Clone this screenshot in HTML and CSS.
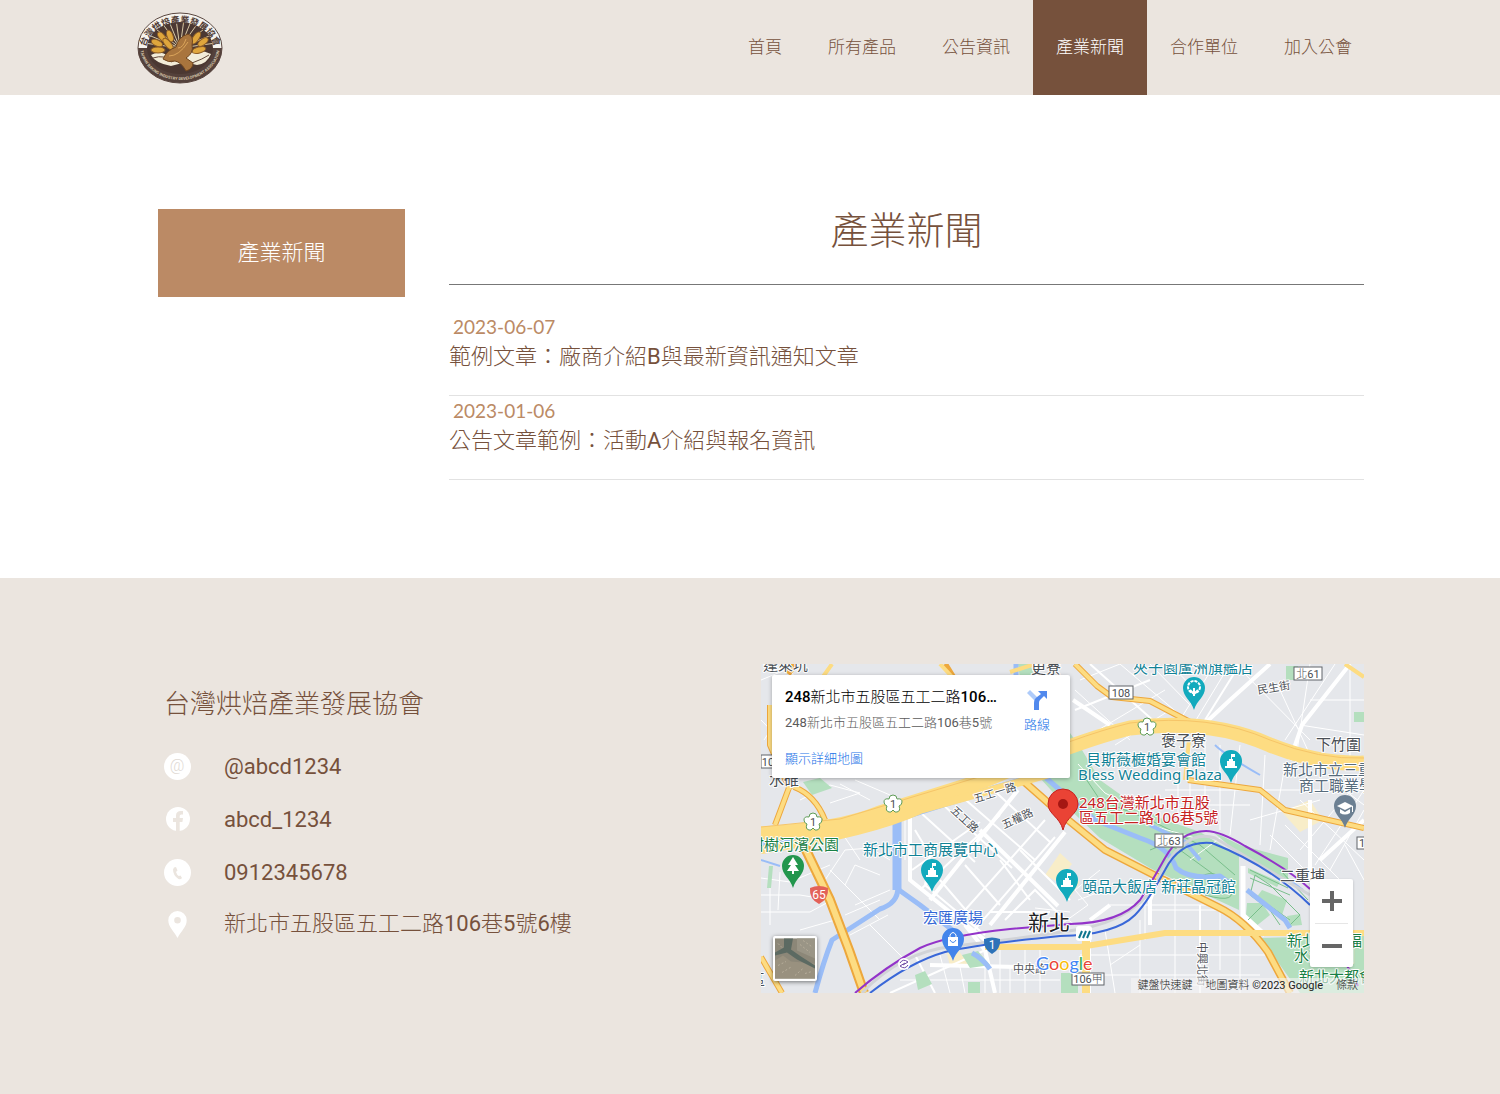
FILE: index.html
```html
<!DOCTYPE html>
<html lang="zh-Hant">
<head>
<meta charset="utf-8">
<meta name="viewport" content="width=device-width, initial-scale=1">
<title>產業新聞 - 台灣烘焙產業發展協會</title>
<link rel="stylesheet" href="styles.css">
</head>
<body>
<header class="site-header">
  <div class="header-inner">
    <a class="logo" href="#" aria-label="台灣烘焙產業發展協會">
      <svg width="86" height="72" viewBox="0 0 86 72">
        <defs>
          <path id="arc-top" d="M8 40 A35 29 0 0 1 78 40"/>
          <path id="arc-bottom" d="M3 34 A40 34 0 0 0 83 34"/>
          <clipPath id="disc"><ellipse cx="43" cy="36" rx="33" ry="26"/></clipPath>
        </defs>
        <ellipse cx="43" cy="36" rx="42" ry="35" fill="#f6f3ee" stroke="#5a4740" stroke-width="1"/>
        <path d="M1 36 A42 35 0 0 0 85 36Z" fill="#54413b"/>
        <ellipse cx="43" cy="36" rx="33" ry="26" fill="#4b3832"/>
        <g clip-path="url(#disc)">
          <path d="M43 36L4 20M43 36L10 10M43 36L20 4M43 36L29 2M43 36L38 0M43 36L48 0M43 36L57 2M43 36L66 4M43 36L76 10M43 36L82 20M43 36L0 30M43 36L86 30" stroke="#d9c9a6" stroke-width="1"/>
          <path d="M14 43Q22 38 30 43T50 42T74 42Q70 52 60 53Q48 49 34 54Q18 51 14 43Z" fill="#f2ecd8"/>
          <path d="M16 46Q28 42 34 50Q44 44 55 51Q66 47 72 43" fill="none" stroke="#63493a" stroke-width="1"/>
        </g>
        <g fill="#dfa63c" stroke="#8e5d25" stroke-width="1">
          <ellipse cx="20" cy="31" rx="6" ry="3" transform="rotate(25 20 31)"/>
          <ellipse cx="25" cy="25" rx="6" ry="3" transform="rotate(50 25 25)"/>
          <ellipse cx="21" cy="38" rx="7" ry="3"/>
          <ellipse cx="31" cy="32" rx="7" ry="3" transform="rotate(50 31 32)"/>
          <ellipse cx="33" cy="24" rx="6" ry="3" transform="rotate(70 33 24)"/>
          <ellipse cx="59" cy="26" rx="7" ry="3" transform="rotate(-55 59 26)"/>
          <ellipse cx="66" cy="30" rx="6" ry="3" transform="rotate(-35 66 30)"/>
          <ellipse cx="62" cy="38" rx="7" ry="3" transform="rotate(-15 62 38)"/>
        </g>
        <path d="M26 47Q30 38 39 35Q41 25 51 22Q57 24 55 33Q57 41 49 46L56 51Q56 57 49 59Q44 50 38 49Q31 51 26 47Z" fill="#a9753d" stroke="#70461f" stroke-width="1"/>
        <path d="M32 44Q42 44 51 30M41 36Q46 36 49 27" fill="none" stroke="#dba55b" stroke-width="1"/>
        <text class="logo-name"><textPath href="#arc-top" startOffset="50%" text-anchor="middle">台灣烘焙產業發展協會</textPath></text>
        <text class="logo-english"><textPath href="#arc-bottom" startOffset="50%" text-anchor="middle">TAIWAN BAKING INDUSTRY DEVELOPMENT ASSOCIATION</textPath></text>
      </svg>
    </a>
    <nav class="main-nav">
      <a href="#">首頁</a>
      <a href="#">所有產品</a>
      <a href="#">公告資訊</a>
      <a class="active" href="#" aria-current="page">產業新聞</a>
      <a href="#">合作單位</a>
      <a href="#">加入公會</a>
    </nav>
  </div>
</header>

<main class="container news">
  <aside class="sidebar"><a class="category" href="#">產業新聞</a></aside>
  <section class="news-content">
    <h1>產業新聞</h1>
    <ul class="news-list">
      <li>
        <time datetime="2023-06-07">2023-06-07</time>
        <a href="#">範例文章：廠商介紹B與最新資訊通知文章</a>
      </li>
      <li>
        <time datetime="2023-01-06">2023-01-06</time>
        <a href="#">公告文章範例：活動A介紹與報名資訊</a>
      </li>
    </ul>
  </section>
</main>

<footer class="site-footer">
  <div class="container footer-inner">
    <section class="contact">
      <h2>台灣烘焙產業發展協會</h2>
      <ul>
        <li>
          <svg class="contact-icon" viewBox="0 0 27 27"><circle cx="13.500" cy="13.500" r="13.500" fill="#fff"/><text class="at-sign" x="13" y="18" text-anchor="middle">@</text></svg>
          <span>@abcd1234</span>
        </li>
        <li>
          <svg class="contact-icon" viewBox="0 0 27 27"><circle cx="14" cy="13" r="12" fill="#fff"/><path d="M12 26V16H9V12H12V9.500Q12 5 17 5H19V8.500H17.300Q15.700 8.500 15.700 10V12H19L18.400 16H15.700V26Z" fill="#ebe5df"/></svg>
          <span>abcd_1234</span>
        </li>
        <li>
          <svg class="contact-icon" viewBox="0 0 27 27"><circle cx="13.500" cy="13.500" r="13.500" fill="#fff"/><path d="M10 8.500L12 8L13.500 11.500L12 13Q13 16 14.800 17L16.500 16.500L18 19Q16.500 21 14.500 20Q9 16.500 9 10.500Z" fill="#ebe5df"/></svg>
          <span>0912345678</span>
        </li>
        <li>
          <svg class="contact-icon" viewBox="0 0 27 27"><path fill-rule="evenodd" d="M13.500 0A9.200 9.200 0 0 0 4.300 9.200C4.300 16 10 20 13.500 27C17 20 22.700 16 22.700 9.200A9.200 9.200 0 0 0 13.500 0ZM13.500 6A3.300 3.300 0 1 1 13.500 12.600A3.300 3.300 0 1 1 13.500 6Z" fill="#fff"/></svg>
          <span>新北市五股區五工二路106巷5號6樓</span>
        </li>
      </ul>
    </section>

    <section class="map" aria-label="地圖">
      <svg class="map-canvas" viewBox="761 664 603 329" preserveAspectRatio="xMidYMid slice">
        <defs>
          <g id="pin"><path d="M0 16C-3 6-11 3-11-6A11 11 0 0 1 11-6C11 3 3 6 0 16Z"/></g>
          <g id="castle" fill="#fff"><path d="M-6 0H6V-2H4V-7H2V-9H-2V-7H-4V-2H-6Z"/><path d="M0-9V-14H4V-11H1V-9Z"/></g>
          <path id="flower" d="M0-9Q4-9 4-5Q9-6 9-2Q9 1 6 2Q8 7 4 8Q2 9 0 6Q-2 9-4 8Q-8 7-6 2Q-9 1-9-2Q-9-6-4-5Q-4-9 0-9Z" fill="#fff" stroke="#5f9c57" stroke-width="1"/>
        </defs>
        <rect x="761" y="664" width="603" height="329" fill="#e5e7eb"/>
        <g fill="#f8edc8"><path d="M1045 875L1060 853L1072 864L1058 882ZM1282 812L1310 800L1323 820L1300 832ZM946 950L955 946L970 966L950 966ZM1065 873L1080 882L1068 900Z"/></g>

        <!-- local streets -->
        <g fill="none" stroke="#fff" stroke-width="1">
          <path d="M761 878L790 882L830 865M761 895L800 895L830 900M770 870V925M780 872L778 910M761 912H810L832 900M825 880L845 850L870 848L890 860M845 885L855 865L880 875M840 830L860 860M855 905L890 890M845 915L880 900M850 935L888 915M830 870L880 920M870 925L905 960M800 930L835 920M820 820V850M905 820V860M790 700L764 740M761 680L790 668L800 690M761 720L790 750"/>
          <path d="M800 800L830 785L860 793L830 803M840 784L870 800M855 780L890 795"/>
          <path d="M1075 690L1130 740M1120 664L1180 715M1150 664L1190 705M1170 664L1195 690M1215 664L1180 720M1230 664L1193 725M1080 680L1120 664M1090 735L1165 690M1115 745L1170 710M1190 745V815M1205 740V820M1220 745V830M1240 745L1230 835M1265 755L1260 845M1285 765L1270 850M1178 770V820M1165 790H1320M1175 805H1250M1235 664L1310 740M1280 690L1310 755M1310 664L1295 765M1335 664L1285 740M1350 664V760M1310 700H1364M1300 725L1364 735"/>
          <path d="M1364 775L1300 850M1364 790L1315 865M1364 810L1330 870M1300 800L1364 860M1285 825L1340 880M1270 835L1310 875M1250 820L1320 800M1338 785L1364 805M1345 845L1364 880"/>
          <path d="M1105 930L1115 993M1140 920V993M1175 885V993M1220 910V970M1240 930V993M1080 955H1270M1080 975H1260M1110 905H1220M1145 890V940M1110 965L1140 945M1145 985H1250M1150 910H1230"/>
          <path d="M940 955L950 993M985 948V993M1000 950V993M1025 947V993M1040 945V993M900 980H1060M960 967L965 993M1010 965V993"/>
          <path d="M1060 925L1088 905L1075 890L1100 870M1078 900L1110 888M1055 910L1075 925M1035 908L1070 912"/>
        </g>
        <g fill="none" stroke="#fff" stroke-width="2">
          <path d="M920 812L975 862M940 802L1012 868M960 795L1035 860M988 785L1050 842M912 870L980 822M920 890L1000 815M958 918L1045 820M970 935L1055 837M915 830L930 855L925 885L985 935"/>
          <path d="M1000 860L1030 900M1020 850L1070 900M965 865L1000 905M940 880L970 915M1005 920L1035 890L1060 915M990 912H1050M1090 664L1175 740M1240 664L1205 720M1075 710L1150 680M1090 935V993M1200 905V993M890 993L990 948M915 955L935 993"/>
        </g>
        <g fill="none" stroke="#fff" stroke-width="4">
          <path d="M910 812V880L985 940M980 830L1058 906M930 900L1018 790M990 925L1065 832M1290 760L1302 725L1350 664M1200 728L1230 700L1270 664M1073 700L1110 725M1150 925V900L1170 850M1310 800V880M1110 905L1090 920"/>
          <path d="M1320 860L1364 820M930 965L1060 968M965 925L985 950L995 993"/>
        </g>

        <!-- parks -->
        <g fill="#b4dfbe">
          <path d="M1070 733L1082 750L1100 780L1128 800L1160 818L1200 832L1239 856V910L1200 892L1150 868L1100 838L1060 800L1040 778L1070 775Z"/>
          <path d="M1260 938L1364 935V993H1300L1280 965Z"/>
          <path d="M1212 831L1240 845L1288 858V880L1240 855Z"/>
          <path d="M1018 664H1030L1035 678H1020ZM915 975L925 971L932 984L918 990ZM962 955L978 951L990 965L970 968ZM968 982H980V993H968ZM1286 666H1298V680H1286ZM1354 712H1364V722H1354ZM769 866H773L771 888H767ZM1061 973H1078V993H1061Z"/>
          <path d="M803 782L820 778L832 788L812 795Z"/>
          <path d="M1247 903L1262 903L1270 915L1255 927L1246 915ZM1262 890L1287 900L1282 915L1256 898ZM1287 916L1300 914L1302 925L1290 926ZM1248 868L1280 882L1277 887L1248 873Z"/>
        </g>
        <path d="M1243 866V915L1265 935" fill="none" stroke="#fff" stroke-width="5"/>

        <!-- park trails -->
        <g fill="none" stroke="#79bf8b" stroke-width="1">
          <path d="M1080 770L1100 800L1150 820L1200 845L1235 875M1150 850Q1165 842 1180 850L1235 890M1195 880Q1215 865 1228 885T1205 895M1250 870L1288 888M1250 878L1290 895M1250 892L1290 920M1248 920L1265 903L1280 925M1280 870L1308 900"/>
          <path d="M1255 875L1250 895L1290 925L1300 915L1270 885Z"/>
        </g>
        <path d="M1078 764L1105 793L1150 816M1140 822L1195 838M1190 860L1220 838" fill="none" stroke="#fff" stroke-width="1"/>

        <!-- water -->
        <g fill="none" stroke="#9abdf7" stroke-linejoin="round">
          <path d="M761 844Q850 835 882 824Q940 804 1025 780" stroke-width="7"/>
          <path d="M897 820V880Q902 902 880 909L832 940Q824 960 815 993" stroke-width="5"/>
          <path d="M897 820V890" stroke-width="9"/>
          <path d="M899 890L920 905L955 932M972 953Q982 958 990 969" stroke-width="5"/>
          <path d="M1016 664V675Q1020 690 1032 705M1046 778L1095 820L1140 838Q1170 848 1176 868Q1190 880 1220 876L1232 885M1247 890L1285 920L1290 928" stroke-width="5"/>
          <path d="M761 860L780 866M1215 745Q1225 755 1260 775M1290 880L1303 890" stroke-width="2"/>
          <path d="M1150 825L1185 842L1200 860" stroke-width="4"/>
        </g>

        <!-- highways -->
        <g fill="none" stroke-linejoin="round">
          <g stroke="#eda73c">
            <path d="M1020 778L1062 815L1105 850L1150 873L1218 907Q1245 920 1268 952L1290 993" stroke-width="8"/>
            <path d="M803 825L806 850L830 900L849 950L864 993" stroke-width="10"/>
            <path d="M775 825L790 785L802 760M825 820Q815 795 794 787M761 957L782 993M770 705V745L790 790M788 674L795 664M945 664L955 680M1075 664L1097 686L1112 697L1150 701L1190 722M1188 780L1260 790L1285 810L1364 828M815 835L900 815" stroke-width="6"/>
          </g>
          <g stroke="#fddc82">
            <path d="M761 834Q840 830 880 813L985 780Q1080 740 1130 728Q1210 718 1270 745Q1320 765 1364 763" stroke-width="15"/>
            <path d="M761 850Q870 833 920 810L1060 771" stroke-width="8"/>
            <path d="M1020 778L1062 815L1105 850L1150 873L1218 907Q1245 920 1268 952L1290 993" stroke-width="5"/>
            <path d="M803 825L806 850L830 900L849 950L864 993" stroke-width="6"/>
            <path d="M775 825L790 785L802 760M825 820Q815 795 794 787M761 957L782 993M770 705V745L790 790M815 688L832 664M940 664L955 680M1010 672L1035 664M1075 664L1097 686L1112 697L1150 701L1190 722M1188 780L1260 790L1285 810L1364 828M1345 664L1364 677M1185 780L1189 740" stroke-width="4"/>
            <path d="M985 947H1080L1165 933H1364" stroke-width="6"/>
            <path d="M1086 940V993" stroke-width="8"/>
          </g>
          <path d="M761 827L840 819L982 776Q1080 735 1130 723Q1210 713 1270 740Q1320 760 1364 758" stroke="#f6c568" stroke-width="1"/>
        </g>

        <!-- rail -->
        <g fill="none" stroke-width="3">
          <path d="M862 993Q900 952 955 946T1075 930T1160 875Q1185 828 1215 838L1310 895" stroke="#d1d3d7"/>
          <path d="M855 993Q885 967 920 948Q945 936 1010 929L1070 924Q1120 923 1140 900Q1150 885 1165 858Q1180 831 1206 831Q1220 831 1245 846Q1290 870 1310 889M1344 960L1358 986" stroke="#9333c9" stroke-width="2"/>
          <path d="M870 993Q910 962 945 952Q980 944 1060 936Q1115 935 1135 915Q1147 903 1165 870Q1180 840 1212 843Q1270 866 1310 905" stroke="#3967d8" stroke-width="2"/>
        </g>

        <!-- road shields -->
        <g class="shield-text" text-anchor="middle">
          <use href="#flower" x="893" y="804"/><text x="893" y="808">1</text>
          <use href="#flower" x="813" y="822"/><text x="813" y="826">1</text>
          <use href="#flower" x="1147" y="727"/><text x="1147" y="731">1</text>
          <g fill="#fff" stroke="#60646a" stroke-width="1"><rect x="1109" y="686" width="24" height="13"/><rect x="1294" y="667" width="28" height="13"/><rect x="1155" y="834" width="28" height="13"/><rect x="1072" y="973" width="32" height="12"/><rect x="761" y="755" width="24" height="13"/><rect x="1357" y="837" width="20" height="12"/></g>
          <text x="1121" y="697">108</text><text x="1308" y="678">北61</text><text x="1169" y="845">北63</text><text x="1088" y="983">106甲</text><text x="768" y="766">10</text><text x="1362" y="847">1</text>
          <path d="M810 888Q819 884 828 888Q829 899 819 904Q809 899 810 888Z" fill="#e36158"/><text class="on-color" x="819" y="899">65</text>
          <path d="M984 939Q992 936 1000 939Q1001 949 992 954Q983 949 984 939Z" fill="#2e73b8"/><text class="on-color" x="992" y="949">1</text>
        </g>
        <g><circle cx="904" cy="964" r="6" fill="#fff"/><path d="M900 963Q903 958 908 962L903 965M908 965Q905 970 900 966L905 963" fill="none" stroke="#6c49a3" stroke-width="1"/><rect x="1076" y="926" width="16" height="15" rx="3" fill="#fff"/><path d="M1079 938L1082 931M1083 938L1086 931M1087 938L1090 931" stroke="#11768f" stroke-width="2"/></g>

        <!-- place pins -->
        <g fill="#12aabd"><use href="#pin" x="1194" y="694"/><use href="#pin" x="1231" y="767"/><use href="#pin" x="932" y="876"/><use href="#pin" x="1067" y="886"/></g>
        <use href="#castle" x="1231" y="768"/><use href="#castle" x="932" y="877"/><use href="#castle" x="1067" y="887"/>
        <g fill="none" stroke="#fff" stroke-width="2"><path d="M1194 696V688M1190 690L1194 694L1198 690"/><circle cx="1194" cy="687" r="6" stroke-dasharray="3 1"/></g>
        <use href="#pin" x="793" y="872" fill="#22964d"/><path d="M793 857L788 865H791L787 871H792V874H794V871H799L795 865H798Z" fill="#fff"/>
        <use href="#pin" x="953" y="945" fill="#4385eb"/><path d="M948 937H958V946H948Z" fill="#fff"/><path d="M950 937V935Q953 930 956 935V937" fill="none" stroke="#fff" stroke-width="1"/><path d="M950 940Q953 945 956 940" fill="none" stroke="#4385eb" stroke-width="1"/>
        <use href="#pin" x="1345" y="812" fill="#6c8093"/><path d="M1337 806L1345 802L1353 806L1345 810ZM1340 809L1345 812L1350 809V813Q1345 816 1340 813ZM1352 806H1353V812H1352Z" fill="#fff"/>
        <path d="M1063 830C1060 817 1048 814 1048 804A15 15 0 0 1 1078 804C1078 814 1066 817 1063 830Z" fill="#ea4335" stroke="#c5221f"/><circle cx="1063" cy="804" r="5" fill="#a51713"/>

        <!-- labels -->
        <g class="map-label">
          <g class="area"><text x="763" y="670">蓬萊坑</text><text x="1031" y="673">更寮</text><text x="769" y="785">水碓</text><text x="1161" y="746">褒子寮</text><text x="1316" y="750">下竹圍</text><text x="1280" y="881">二重埔</text><text x="750" y="985">區</text></g>
          <g class="street"><text transform="translate(975 803) rotate(-17)">五工一路</text><text transform="translate(950 811) rotate(43)">五工路</text><text transform="translate(1004 829) rotate(-25)">五權路</text><text transform="translate(1258 694) rotate(-9)">民生街</text><text x="1013" y="973">中央路</text><text transform="translate(1198 942) rotate(90)">中興北街</text></g>
          <g class="poi"><text x="1133" y="673">夾子園蘆洲旗艦店</text><text x="1086" y="765">貝斯薇榳婚宴會館</text><text class="latin" x="1078" y="780">Bless Wedding Plaza</text><text x="863" y="855">新北市工商展覽中心</text><text x="1082" y="892">頤品大飯店 新莊晶冠館</text></g>
          <g class="school"><text x="1283" y="775">新北市立三重</text><text x="1299" y="791">商工職業學校</text></g>
          <g class="green"><text x="749" y="850">柑樹河濱公園</text><text x="1287" y="946">新北市幸福</text><text x="1294" y="961">水漾公園</text><text x="1299" y="982">新北大都會</text></g>
          <text class="mall" x="923" y="923">宏匯廣場</text>
          <text class="city" x="1028" y="930">新北</text>
          <g class="result"><text x="1079" y="808">248台灣新北市五股</text><text x="1079" y="823">區五工二路106巷5號</text></g>
        </g>
        <text class="google" x="1036" y="970"><tspan fill="#4285f4">G</tspan><tspan fill="#ea4335">o</tspan><tspan fill="#fbbc04">o</tspan><tspan fill="#4285f4">g</tspan><tspan fill="#34a853">l</tspan><tspan fill="#ea4335">e</tspan></text>
      </svg>

      <div class="place-card">
        <div class="place-info">
          <strong>248新北市五股區五工二路106巷5號</strong>
          <span>248新北市五股區五工二路106巷5號</span>
          <a href="#">顯示詳細地圖</a>
        </div>
        <a class="directions" href="#">
          <svg width="22" height="22" viewBox="0 0 22 22"><path d="M1 4L4 1L12 9L9 12Z" fill="#aecbfa"/><path d="M8 21V14Q8 10 11 8L15 5L12 2H21V10L18 7L14 11Q13 12 13 14V21Z" fill="#5189ed"/></svg>
          <span>路線</span>
        </a>
      </div>
      <button class="satellite" type="button" aria-label="衛星檢視">
        <svg viewBox="0 0 40 40" width="100%" height="100%"><rect width="40" height="40" fill="#8c8778"/><path d="M0 22L8 17L16 23L40 25V40H0Z" fill="#99917f"/><path d="M22 0H40V20L22 12Z" fill="#9a9586"/><path d="M9 0H18L16 11L26 18L40 27V30L22 21L12 14L0 17V14L9 9Z" fill="#5c6a62"/><path d="M3 27L11 23M7 34L17 28M20 37L28 30M25 6L35 14M28 2L38 9M3 5L7 9M30 35L37 33" stroke="#b7ae9b" stroke-width="1" stroke-dasharray="2 2"/></svg>
      </button>
      <div class="zoom-control">
        <button type="button" aria-label="放大"><svg width="20" height="20" viewBox="0 0 20 20"><path d="M8 0H12V8H20V12H12V20H8V12H0V8H8Z" fill="#666"/></svg></button>
        <button type="button" aria-label="縮小"><svg width="20" height="20" viewBox="0 0 20 20"><path d="M0 8H20V12H0Z" fill="#666"/></svg></button>
      </div>
      <div class="attribution"><a href="#">鍵盤快速鍵</a><span>地圖資料 ©2023 Google</span><a href="#">條款</a></div>
    </section>
  </div>
</footer>
</body>
</html>
```

FILE: styles.css
```css
* {
  box-sizing: border-box;
}

body {
  margin: 0;
  color: #76513c;
  background: #fff;
  font-family: Roboto, "Noto Sans CJK TC Light", "Noto Sans CJK TC", sans-serif;
  font-weight: 400;
}

a {
  color: inherit;
  text-decoration: none;
}

ul {
  list-style: none;
  margin: 0;
  padding: 0;
}

.site-header {
  background: #ebe5df;
}

.header-inner {
  max-width: 1250px;
  margin: 0 auto;
  padding-left: 12px;
  display: flex;
  justify-content: space-between;
  align-items: center;
}

.logo svg {
  display: block;
}

.logo-name {
  font-family: "Noto Sans CJK TC", sans-serif;
  font-size: 9px;
  font-weight: 700;
  fill: #4f3b34;
}

.logo-english {
  font-size: 4px;
  font-weight: 700;
  fill: #d5c5aa;
}

.main-nav {
  display: flex;
}

.main-nav a {
  padding: 0 23px;
  font-size: 17px;
  font-weight: 300;
  line-height: 95px;
}

.main-nav .active {
  background: #76513c;
  color: #fff;
}

.container {
  max-width: 1228px;
  margin: 0 auto;
  padding-left: 22px;
}

.news {
  display: flex;
  align-items: flex-start;
  gap: 44px;
  padding-top: 114px;
  padding-bottom: 98px;
}

.sidebar {
  flex: 0 0 247px;
}

.category {
  display: block;
  background: #bb8a65;
  color: #fff;
  font-size: 22px;
  font-weight: 300;
  line-height: 88px;
  text-align: center;
}

.news-content {
  flex: 1;
}

h1 {
  margin: 0 0 27px;
  padding-bottom: 31px;
  border-bottom: 1px solid #777;
  font-size: 38px;
  font-weight: 300;
  line-height: 44px;
  text-align: center;
}

.news-list li {
  padding-bottom: 23px;
  border-bottom: 1px solid #e2e2e2;
  line-height: 30px;
}

.news-list time {
  display: block;
  padding-left: 4px;
  color: #bb8a65;
  font-family: Lato, sans-serif;
  font-size: 19px;
}

.news-list a {
  display: block;
  font-size: 22px;
}

.site-footer {
  background: #ebe5df;
  padding: 86px 0 101px;
}

.footer-inner {
  display: grid;
  grid-template-columns: 1fr 1fr;
}

.contact {
  padding: 20px 0 0 6px;
}

h2 {
  margin: 0 0 16px;
  font-size: 26px;
  font-weight: 300;
  line-height: 40px;
}

.contact li {
  display: flex;
  align-items: center;
  gap: 33px;
  font-size: 22px;
  line-height: 53px;
}

.contact li:last-child {
  line-height: 50px;
}

.contact-icon {
  width: 27px;
  height: 27px;
}

.at-sign {
  fill: #e0d9d3;
  font-size: 16px;
  font-weight: 300;
}

.map {
  position: relative;
  overflow: hidden;
}

.map-canvas {
  display: block;
  width: 100%;
  height: 329px;
}

.shield-text text {
  font-size: 11px;
  fill: #4b4e52;
}

.shield-text .on-color {
  font-size: 12px;
  fill: #fff;
}

.map-label {
  font-family: "Noto Sans", "Noto Sans CJK TC", sans-serif;
  font-size: 15px;
  paint-order: stroke;
  stroke: #fff;
  stroke-width: 2px;
  stroke-linejoin: round;
}

.area {
  fill: #4a4f55;
}

.street {
  font-size: 11px;
  fill: #50545a;
}

.poi {
  fill: #118296;
}

.school {
  fill: #566b7c;
}

.green {
  fill: #188045;
}

.mall {
  fill: #3367d6;
}

.city {
  font-size: 21px;
  fill: #202124;
}

.result {
  fill: #c5221f;
}

.google {
  font-family: Lato, sans-serif;
  font-size: 18px;
  paint-order: stroke;
  stroke: #fff;
  stroke-width: 2px;
}

.place-card {
  position: absolute;
  top: 11px;
  left: 11px;
  width: 298px;
  padding: 11px 20px 9px 13px;
  display: flex;
  justify-content: space-between;
  background: #fff;
  border-radius: 2px;
  box-shadow: 0 1px 4px rgba(0, 0, 0, 0.3);
}

.place-info {
  display: flex;
  flex-direction: column;
  width: 218px;
  font-size: 13px;
  line-height: 21px;
}

.place-info strong {
  overflow: hidden;
  white-space: nowrap;
  text-overflow: ellipsis;
  color: #000;
  font-size: 15px;
  font-weight: 500;
  line-height: 22px;
}

.place-info span {
  margin-top: 4px;
  color: #5b5b5b;
  white-space: nowrap;
}

.place-info a {
  margin-top: 15px;
}

.place-info a,
.directions {
  color: #1a73e8;
  font-size: 13px;
}

.directions {
  display: flex;
  flex-direction: column;
  align-items: center;
  padding-top: 3px;
  line-height: 28px;
}

.satellite {
  position: absolute;
  left: 12px;
  bottom: 12px;
  width: 44px;
  height: 45px;
  padding: 0;
  border: 2px solid #fff;
  border-radius: 2px;
  box-shadow: 0 1px 4px rgba(0, 0, 0, 0.5);
}

.satellite svg {
  display: block;
}

.zoom-control {
  position: absolute;
  right: 11px;
  bottom: 26px;
  width: 43px;
  padding: 0 5px;
  display: flex;
  flex-direction: column;
  background: #fff;
  border-radius: 2px;
  box-shadow: 0 1px 3px rgba(0, 0, 0, 0.2);
}

.zoom-control button {
  display: grid;
  place-items: center;
  height: 44px;
  padding: 0;
  border: 0;
  background: none;
}

.zoom-control button + button {
  border-top: 1px solid #e6e6e6;
}

.attribution {
  position: absolute;
  right: 0;
  bottom: 0;
  padding: 0 6px;
  display: flex;
  gap: 13px;
  background: rgba(245, 245, 245, 0.6);
  color: #222;
  font-size: 11px;
  line-height: 15px;
}
```
